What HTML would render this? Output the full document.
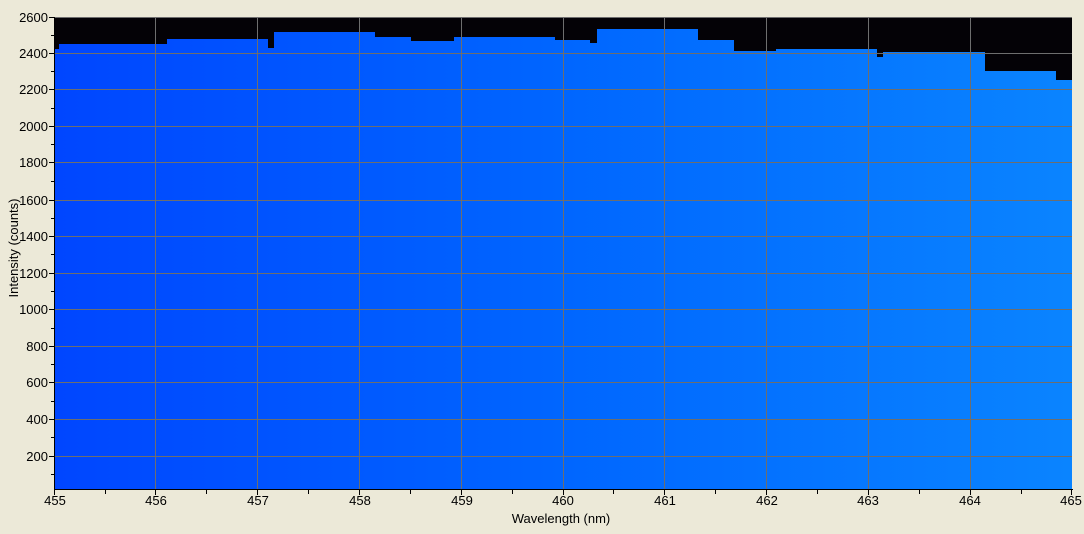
<!DOCTYPE html>
<html><head><meta charset="utf-8"><style>
html,body{margin:0;padding:0;background:#ece9d8;}
svg{display:block;}
text{font-family:"Liberation Sans",sans-serif;font-size:13px;fill:#000;}
</style></head><body>
<svg width="1084" height="534" viewBox="0 0 1084 534" xmlns="http://www.w3.org/2000/svg">
<defs>
<linearGradient id="g" x1="0" x2="1" y1="0" y2="0">
<stop offset="0" stop-color="#0046ff"/>
<stop offset="0.5" stop-color="#0066ff"/>
<stop offset="1" stop-color="#0a84ff"/>
</linearGradient>
</defs>
<rect x="55" y="17" width="1017" height="472" fill="#040206"/>
<path fill="url(#g)" d="M55 489 L55 49 L59 49 L59 44 L167 44 L167 39 L268 39 L268 48 L274 48 L274 32 L375 32 L375 37 L411 37 L411 41 L454 41 L454 37 L555 37 L555 40 L590 40 L590 43 L597 43 L597 29 L698 29 L698 40 L734 40 L734 51 L776 51 L776 49 L877 49 L877 57 L883 57 L883 52 L985 52 L985 71 L1056 71 L1056 80 L1072 80 L1072 489 Z"/>
<g stroke="#6e6e6e" stroke-width="1">
<line x1="55" x2="1072" y1="17.5" y2="17.5"/>
<line x1="55" x2="1072" y1="53.5" y2="53.5"/>
<line x1="55" x2="1072" y1="89.5" y2="89.5"/>
<line x1="55" x2="1072" y1="126.5" y2="126.5"/>
<line x1="55" x2="1072" y1="162.5" y2="162.5"/>
<line x1="55" x2="1072" y1="200.5" y2="200.5"/>
<line x1="55" x2="1072" y1="236.5" y2="236.5"/>
<line x1="55" x2="1072" y1="273.5" y2="273.5"/>
<line x1="55" x2="1072" y1="309.5" y2="309.5"/>
<line x1="55" x2="1072" y1="346.5" y2="346.5"/>
<line x1="55" x2="1072" y1="382.5" y2="382.5"/>
<line x1="55" x2="1072" y1="419.5" y2="419.5"/>
<line x1="55" x2="1072" y1="456.5" y2="456.5"/>
<line y1="17" y2="489" x1="155.5" x2="155.5"/>
<line y1="17" y2="489" x1="257.5" x2="257.5"/>
<line y1="17" y2="489" x1="359.5" x2="359.5"/>
<line y1="17" y2="489" x1="461.5" x2="461.5"/>
<line y1="17" y2="489" x1="563.5" x2="563.5"/>
<line y1="17" y2="489" x1="664.5" x2="664.5"/>
<line y1="17" y2="489" x1="766.5" x2="766.5"/>
<line y1="17" y2="489" x1="868.5" x2="868.5"/>
<line y1="17" y2="489" x1="970.5" x2="970.5"/>
</g>
<g stroke="#000" stroke-width="1">
<line x1="54.5" x2="54.5" y1="17" y2="490"/>
<line x1="54" x2="1073" y1="489.5" y2="489.5"/>
<line x1="49" x2="55" y1="17.5" y2="17.5"/><line x1="51" x2="55" y1="35.5" y2="35.5"/>
<line x1="49" x2="55" y1="53.5" y2="53.5"/><line x1="51" x2="55" y1="71.5" y2="71.5"/>
<line x1="49" x2="55" y1="89.5" y2="89.5"/><line x1="51" x2="55" y1="108.5" y2="108.5"/>
<line x1="49" x2="55" y1="126.5" y2="126.5"/><line x1="51" x2="55" y1="144.5" y2="144.5"/>
<line x1="49" x2="55" y1="162.5" y2="162.5"/><line x1="51" x2="55" y1="181.5" y2="181.5"/>
<line x1="49" x2="55" y1="200.5" y2="200.5"/><line x1="51" x2="55" y1="218.5" y2="218.5"/>
<line x1="49" x2="55" y1="236.5" y2="236.5"/><line x1="51" x2="55" y1="254.5" y2="254.5"/>
<line x1="49" x2="55" y1="273.5" y2="273.5"/><line x1="51" x2="55" y1="291.5" y2="291.5"/>
<line x1="49" x2="55" y1="309.5" y2="309.5"/><line x1="51" x2="55" y1="328.5" y2="328.5"/>
<line x1="49" x2="55" y1="346.5" y2="346.5"/><line x1="51" x2="55" y1="364.5" y2="364.5"/>
<line x1="49" x2="55" y1="382.5" y2="382.5"/><line x1="51" x2="55" y1="401.5" y2="401.5"/>
<line x1="49" x2="55" y1="419.5" y2="419.5"/><line x1="51" x2="55" y1="437.5" y2="437.5"/>
<line x1="49" x2="55" y1="456.5" y2="456.5"/><line x1="51" x2="55" y1="474.5" y2="474.5"/>
<line y1="489" y2="495" x1="54.5" x2="54.5"/><line y1="489" y2="494" x1="105.5" x2="105.5"/>
<line y1="489" y2="495" x1="155.5" x2="155.5"/><line y1="489" y2="494" x1="206.5" x2="206.5"/>
<line y1="489" y2="495" x1="257.5" x2="257.5"/><line y1="489" y2="494" x1="308.5" x2="308.5"/>
<line y1="489" y2="495" x1="359.5" x2="359.5"/><line y1="489" y2="494" x1="410.5" x2="410.5"/>
<line y1="489" y2="495" x1="461.5" x2="461.5"/><line y1="489" y2="494" x1="512.5" x2="512.5"/>
<line y1="489" y2="495" x1="563.5" x2="563.5"/><line y1="489" y2="494" x1="613.5" x2="613.5"/>
<line y1="489" y2="495" x1="664.5" x2="664.5"/><line y1="489" y2="494" x1="715.5" x2="715.5"/>
<line y1="489" y2="495" x1="766.5" x2="766.5"/><line y1="489" y2="494" x1="817.5" x2="817.5"/>
<line y1="489" y2="495" x1="868.5" x2="868.5"/><line y1="489" y2="494" x1="919.5" x2="919.5"/>
<line y1="489" y2="495" x1="970.5" x2="970.5"/><line y1="489" y2="494" x1="1021.5" x2="1021.5"/>
<line y1="489" y2="495" x1="1071.5" x2="1071.5"/>
</g>
<g text-anchor="end">
<text x="48" y="22">2600</text><text x="48" y="58">2400</text><text x="48" y="94">2200</text>
<text x="48" y="131">2000</text><text x="48" y="167">1800</text><text x="48" y="205">1600</text>
<text x="48" y="241">1400</text><text x="48" y="278">1200</text><text x="48" y="314">1000</text>
<text x="48" y="351">800</text><text x="48" y="387">600</text><text x="48" y="424">400</text>
<text x="48" y="461">200</text>
</g>
<g text-anchor="middle">
<text x="55" y="505">455</text><text x="156" y="505">456</text><text x="258" y="505">457</text>
<text x="360" y="505">458</text><text x="462" y="505">459</text><text x="563" y="505">460</text>
<text x="665" y="505">461</text><text x="767" y="505">462</text><text x="868" y="505">463</text>
<text x="970" y="505">464</text><text x="1071" y="505">465</text>
<text x="561" y="523">Wavelength (nm)</text>
<text transform="translate(18 248) rotate(-90)">Intensity (counts)</text>
</g>
</svg>
</body></html>
